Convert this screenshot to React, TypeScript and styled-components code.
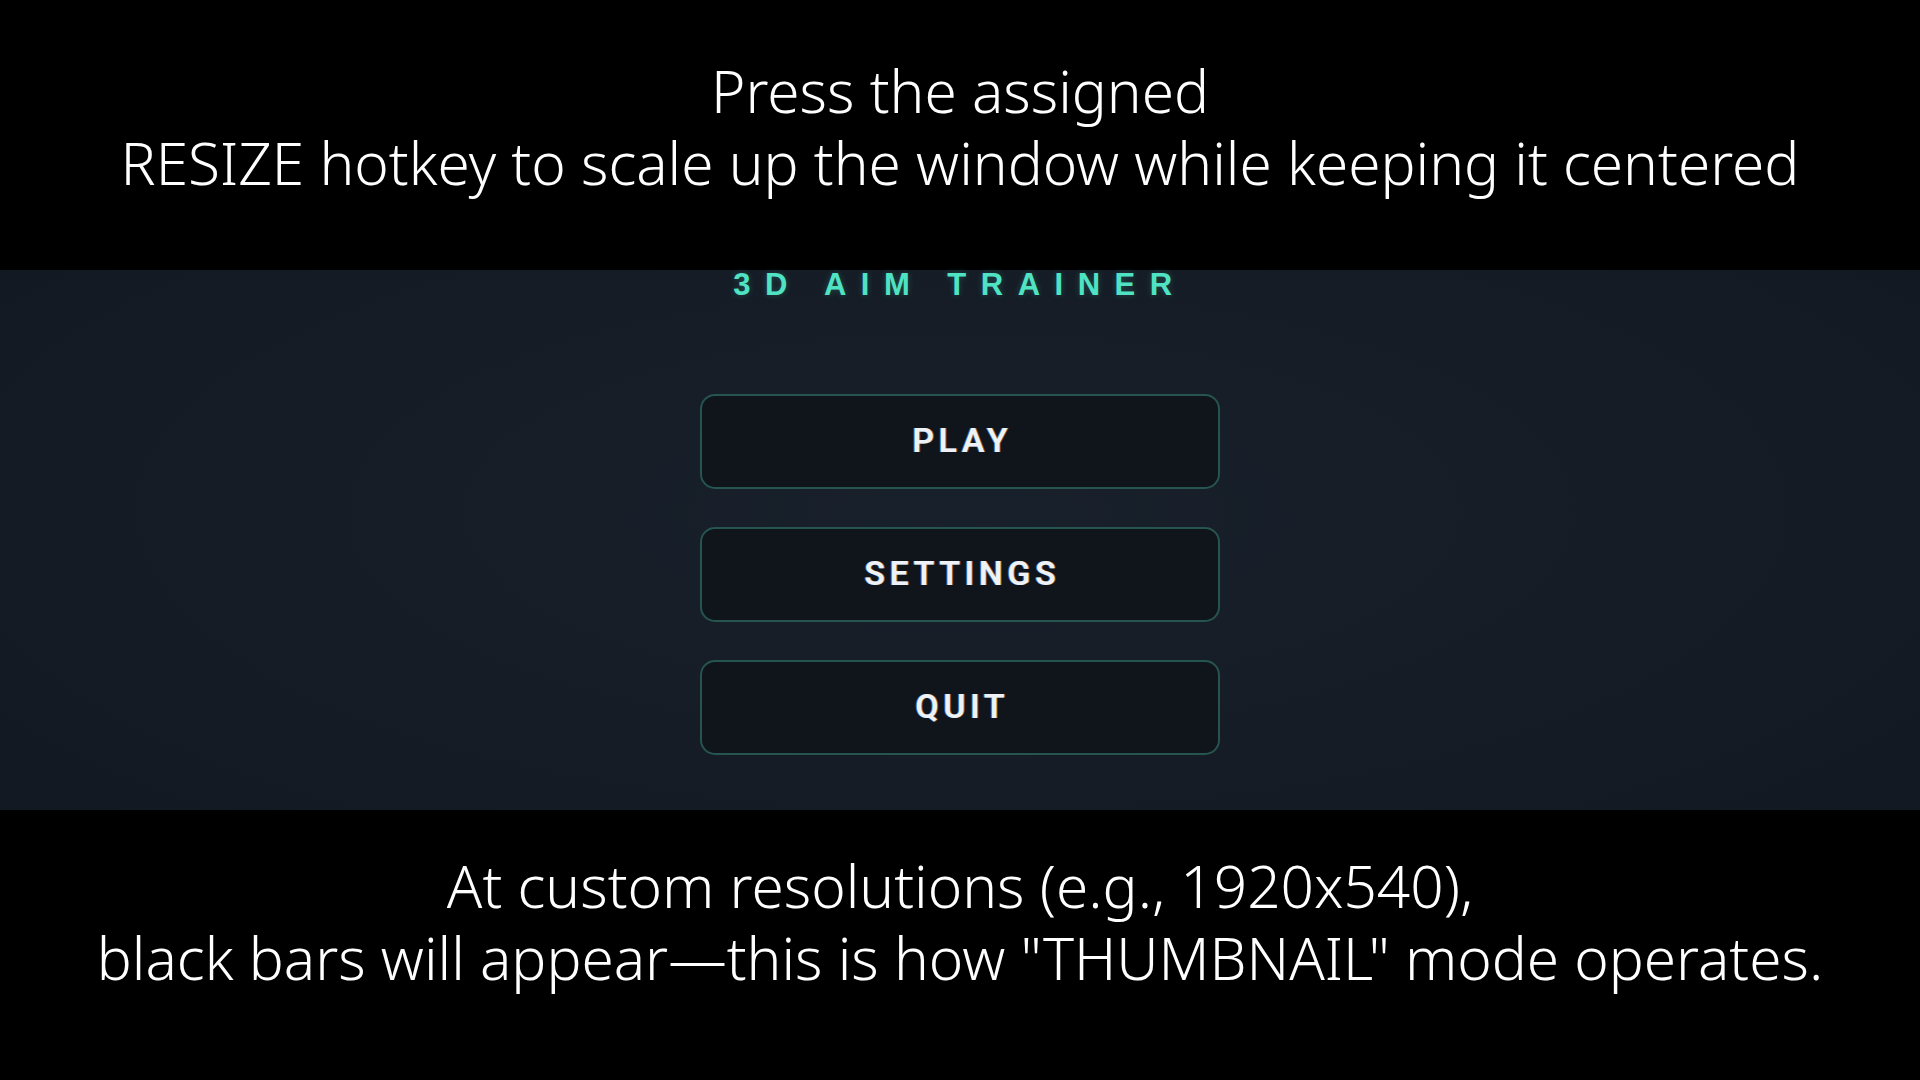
import React from 'react';
import styled, { createGlobalStyle } from 'styled-components';

const GlobalStyle = createGlobalStyle`
  html, body {
    margin: 0;
    padding: 0;
    background: #000;
  }
  #root {
    width: 1920px;
    height: 1080px;
  }
`;

const Screen = styled.div`
  width: 1920px;
  height: 1080px;
  display: flex;
  flex-direction: column;
  background: #000;
  overflow: hidden;
`;

const Caption = styled.div<{ $shift: number }>`
  height: 270px;
  flex: none;
  display: flex;
  flex-direction: column;
  align-items: center;
  justify-content: center;
  padding-bottom: ${(p) => p.$shift}px;
  box-sizing: border-box;
  font-family: 'Noto Sans', 'Open Sans', sans-serif;
  font-weight: 300;
  font-size: 58.5px;
  line-height: 72px;
  color: #fff;
  white-space: nowrap;
`;

const Game = styled.main`
  height: 540px;
  flex: none;
  display: flex;
  flex-direction: column;
  align-items: center;
  background: radial-gradient(
    ellipse 70% 90% at 50% 45%,
    #18202b 0%,
    #151c26 55%,
    #121820 100%
  );
`;

const Title = styled.h1`
  margin: 0;
  font-family: 'Liberation Sans', Arial, sans-serif;
  font-weight: 700;
  font-size: 31px;
  line-height: 30px;
  letter-spacing: 14.5px;
  color: #4fe3c3;
  text-shadow: 0 0 6px rgba(79, 227, 195, 0.25);
`;

const Menu = styled.nav`
  margin-top: 94px;
  display: flex;
  flex-direction: column;
  gap: 38px;
`;

const MenuButton = styled.button`
  width: 520px;
  height: 95px;
  box-sizing: border-box;
  border: 2px solid #26544f;
  border-radius: 15px;
  background: #10141b;
  color: #eef2f7;
  font-family: Roboto, 'Liberation Sans', sans-serif;
  font-weight: 600;
  font-size: 34px;
  letter-spacing: 4.5px;
  padding: 0 0 4px 4.5px;
  text-shadow: -1px 0 rgba(90, 170, 255, 0.55), 1px 0 rgba(255, 160, 70, 0.45);
  cursor: pointer;
`;

const items = ['PLAY', 'SETTINGS', 'QUIT'];

export default function App() {
  return (
    <>
      <GlobalStyle />
      <Screen>
        <Caption $shift={18}>
          <div>Press the assigned</div>
          <div>RESIZE hotkey to scale up the window while keeping it centered</div>
        </Caption>
        <Game>
          <Title>3D AIM TRAINER</Title>
          <Menu>
            {items.map((label) => (
              <MenuButton key={label}>{label}</MenuButton>
            ))}
          </Menu>
        </Game>
        <Caption $shift={48}>
          <div>At custom resolutions (e.g., 1920x540),</div>
          <div>black bars will appear—this is how "THUMBNAIL" mode operates.</div>
        </Caption>
      </Screen>
    </>
  );
}
